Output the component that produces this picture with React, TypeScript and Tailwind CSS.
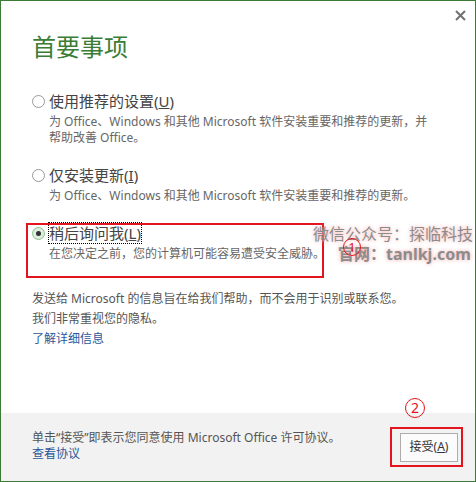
import React from "react";

const font = "font-['Noto_Sans','Noto_Sans_CJK_SC',sans-serif]";

function Radio({ checked }: { checked?: boolean }) {
  if (checked) {
    return (
      <span className="w-[13px] h-[13px] rounded-full border border-[#8fbf8f] bg-[#dcefdc] flex items-center justify-center shrink-0">
        <span className="w-[5px] h-[5px] rounded-full bg-[#333]" />
      </span>
    );
  }
  return <span className="w-[13px] h-[13px] rounded-full border border-[#9a9a9a] bg-white shrink-0" />;
}

function Option({
  label,
  hotkey,
  checked,
  focused,
  children,
}: {
  label: string;
  hotkey: string;
  checked?: boolean;
  focused?: boolean;
  children: React.ReactNode;
}) {
  return (
    <div>
      <div className="flex items-center gap-[4px]">
        <Radio checked={checked} />
        <span
          className={
            "inline-block text-[15px] leading-[20px] text-[#444] whitespace-nowrap " +
            (focused ? "outline outline-1 outline-dotted outline-black" : "")
          }
        >
          {label}(<span className="underline">{hotkey}</span>)
        </span>
      </div>
      <div className="pl-[17px] mt-[3px] text-[12px] leading-[16px] text-[#666] whitespace-nowrap">
        {children}
      </div>
    </div>
  );
}

export default function App() {
  return (
    <div className={"relative w-[476px] h-[482px] border border-[#3b7b35] bg-white flex flex-col " + font}>
      {/* close */}
      <svg className="absolute left-[454px] top-[9px]" width="11" height="11" viewBox="0 0 11 11">
        <path d="M1 1L10 10M10 1L1 10" stroke="#707070" strokeWidth="2" />
      </svg>

      <div className="flex-1 pl-[31px] pr-[20px] pt-[30px]">
        <h1 className="text-[24px] leading-[32px] text-[#3b7d36]">首要事项</h1>

        <div className="mt-[28px] flex flex-col gap-[19px]">
          <Option label="使用推荐的设置" hotkey="U">
            为 Office、Windows 和其他 Microsoft 软件安装重要和推荐的更新，并
            <br />
            帮助改善 Office。
          </Option>
          <Option label="仅安装更新" hotkey="I">
            为 Office、Windows 和其他 Microsoft 软件安装重要和推荐的更新。
          </Option>
          <Option label="稍后询问我" hotkey="L" checked focused>
            在您决定之前，您的计算机可能容易遭受安全威胁。
          </Option>
        </div>

        <div className="mt-[27px] text-[12px] leading-[20px] text-[#555]">
          <p>发送给 Microsoft 的信息旨在给我们帮助，而不会用于识别或联系您。</p>
          <p>我们非常重视您的隐私。</p>
          <a className="text-[#2b5797] cursor-pointer">了解详细信息</a>
        </div>
      </div>

      <footer className="h-[68px] bg-[#f2f2f2] flex justify-between pl-[31px] pr-[17px]">
        <div className="pt-[17px] text-[12px] leading-[16px] text-[#555]">
          <p>单击“接受”即表示您同意使用 Microsoft Office 许可协议。</p>
          <a className="text-[#2b5797] cursor-pointer">查看协议</a>
        </div>
        <div className="flex items-center">
          <button className="w-[58px] h-[29px] border border-[#adadad] bg-[#fbfbfb] text-[12px] text-[#333]">
            接受(<span className="underline">A</span>)
          </button>
        </div>
      </footer>

      {/* annotations */}
      <div className="absolute left-[25px] top-[222px] w-[298px] h-[55px] border-2 border-[#e3141e]" />
      <div className="absolute left-[312px] top-[223px] text-[16px] leading-[20px] text-[#8c8c8c] whitespace-nowrap [text-shadow:0_0_4px_#f5a3a3]">
        微信公众号：探临科技
      </div>
      <div className="absolute left-[337px] top-[243px] text-[16px] leading-[20px] font-bold text-[#8c8c8c] whitespace-nowrap [text-shadow:0_0_4px_#f5a3a3]">
        官网：tanlkj.com
      </div>
      <div className="absolute left-[342px] top-[237px] w-[18px] h-[18px] rounded-full border-[1.5px] border-[#e3141e] flex items-center justify-center text-[13px] leading-none text-[#e3141e]">
        1
      </div>
      <div className="absolute left-[389px] top-[426px] w-[73px] h-[40px] border-2 border-[#e3141e]" />
      <div className="absolute left-[404px] top-[397px] w-[20px] h-[20px] rounded-full border-[1.5px] border-[#e3141e] flex items-center justify-center text-[14px] leading-none text-[#e3141e]">
        2
      </div>
    </div>
  );
}
